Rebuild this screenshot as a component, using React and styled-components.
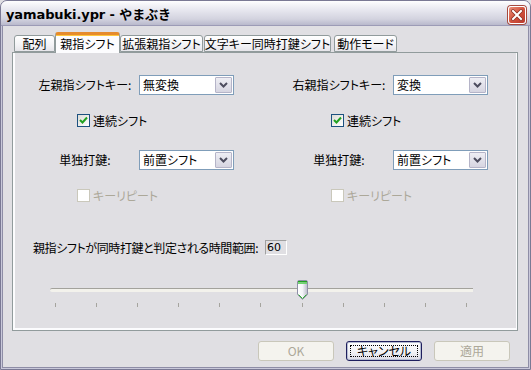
import React from 'react';
import styled, { createGlobalStyle } from 'styled-components';

const JP = `"Noto Sans CJK JP", "Noto Sans", sans-serif`;

const GlobalStyle = createGlobalStyle`
  html, body { margin: 0; padding: 0; background: #e0dfe3; }
  body { width: 531px; height: 370px; overflow: hidden; font-family: ${JP}; }
  * { box-sizing: border-box; }
`;

const Window = styled.div`
  width: 531px;
  height: 370px;
  display: flex;
  flex-direction: column;
  background: #e0dfe3;
  border-radius: 7px 7px 0 0;
  border: 1px solid #7a7994;
  box-shadow: inset 1px 0 #c9c8da, inset -1px 0 #c9c8da, inset 0 -1px #c9c8da,
    inset 2px 0 #8e8da6, inset -2px 0 #8e8da6, inset 0 -2px #8e8da6,
    inset 3px 0 #e0dfe3, inset -3px 0 #e0dfe3, inset 0 -3px #e0dfe3;
  overflow: hidden;
`;

const TitleBar = styled.div`
  height: 25px;
  flex: none;
  display: flex;
  align-items: center;
  justify-content: space-between;
  padding: 0 4px 0 5px;
  background: linear-gradient(#ffffff 0%, #f4f4f8 15%, #e3e3ec 45%, #d3d3df 75%, #b9b9cc 100%);
  border-bottom: 1px solid #9c9bb6;
`;

const Title = styled.span`
  font-family: "DejaVu Sans", ${JP};
  font-weight: bold;
  font-size: 13px;
  color: #000;
  letter-spacing: -0.1px;
  margin-top: 1px;
`;

const CloseBtn = styled.div`
  width: 18px;
  height: 18px;
  margin-top: 4px;
  border-radius: 3px;
  border: 1px solid #fff;
  background: linear-gradient(135deg, #e9907a 0%, #d3533e 50%, #b8392c 100%);
  box-shadow: 0 0 0 1px #a64a3e;
  display: flex;
  align-items: center;
  justify-content: center;
`;

const Body = styled.div`
  flex: 1;
  display: flex;
  flex-direction: column;
  padding: 6px 12px 0 11px;
`;

const TabRow = styled.div`
  display: flex;
  align-items: flex-end;
  height: 20px;
  padding-left: 2px;
  position: relative;
  z-index: 2;
`;

const Tab = styled.div`
  width: ${p => p.$w}px;
  margin-left: ${p => p.$ml || 0}px;
  height: ${p => (p.$active ? 21 : 17)}px;
  margin-bottom: ${p => (p.$active ? -1 : 0)}px;
  border: 1px solid #919b9c;
  border-bottom: ${p => (p.$active ? 'none' : '1px solid #919b9c')};
  border-radius: 3px 3px 0 0;
  background: ${p => (p.$active ? '#fcfcfe' : 'linear-gradient(#ffffff, #f3f3f6 60%, #e6e5ea)')};
  ${p => p.$active && 'border-top: 3px solid #e68b2c; box-shadow: inset 0 1px #ffc83c;'}
  font-family: ${JP};
  font-size: 12px;
  font-feature-settings: "palt";
  color: #000;
  display: flex;
  align-items: center;
  justify-content: center;
  line-height: 1;
  padding-top: ${p => (p.$active ? 0 : 1)}px;
  white-space: nowrap;
`;

const Panel = styled.div`
  width: 506px;
  height: 279px;
  border: 1px solid #919b9c;
  background: #e0dfe3;
  box-shadow: inset 2px 0 #fcfcfe, inset 0 -2px #fcfcfe, inset -1px 0 #fcfcfe;
  display: flex;
  flex-direction: column;
  padding: 22px 0 0 19px;
`;

const Columns = styled.div`
  display: grid;
  grid-template-columns: 254px 254px;
`;

const Column = styled.div`
  display: flex;
  flex-direction: column;
`;

const FieldRow = styled.div`
  display: flex;
  align-items: center;
  height: 20px;
  margin-top: ${p => p.$mt || 0}px;
`;

const Label = styled.span`
  width: 106px;
  text-align: center;
  font-family: ${JP};
  font-size: 12px;
  font-feature-settings: "palt";
  color: #000;
  white-space: nowrap;
  line-height: 1;
`;

const Select = styled.div`
  width: 95px;
  height: 20px;
  margin-left: 1px;
  border: 1px solid #7f9db9;
  background: #fff;
  display: flex;
  align-items: stretch;
`;

const SelectText = styled.span`
  flex: 1;
  padding-left: 3px;
  font-family: ${JP};
  font-size: 12px;
  font-feature-settings: "palt";
  color: #000;
  line-height: 18px;
  white-space: nowrap;
`;

const DropBtn = styled.div`
  width: 17px;
  margin: 1px;
  border: 1px solid #b5b4c8;
  border-radius: 1px;
  background: linear-gradient(#eeeef4, #d6d5e1);
  display: flex;
  align-items: center;
  justify-content: center;
`;

const CheckRow = styled.div`
  display: flex;
  align-items: center;
  height: 13px;
  margin-top: ${p => p.$mt || 0}px;
  padding-left: 45px;
  gap: 3px;
`;

const Box = styled.div`
  width: 13px;
  height: 13px;
  border: 1px solid ${p => (p.$disabled ? '#cac8bb' : '#1c5180')};
  background: ${p => (p.$disabled ? '#fff' : 'linear-gradient(135deg, #dcdcd7, #fff)')};
  display: flex;
  align-items: center;
  justify-content: center;
`;

const CheckText = styled.span`
  font-family: ${JP};
  font-size: 12px;
  font-feature-settings: "palt";
  color: ${p => (p.$disabled ? '#aca899' : '#000')};
  white-space: nowrap;
  line-height: 1;
`;

const TimeRow = styled.div`
  display: flex;
  align-items: center;
  margin-top: 38px;
  padding-left: 1px;
`;

const TimeLabel = styled.span`
  width: 232px;
  font-family: ${JP};
  font-size: 12px;
  font-feature-settings: "palt";
  letter-spacing: -0.4px;
  color: #000;
  white-space: nowrap;
  line-height: 1;
`;

const ValueBox = styled.div`
  width: 22px;
  height: 15px;
  border-top: 1px solid #a0a0a0;
  border-left: 1px solid #a0a0a0;
  border-right: 1px solid #fff;
  border-bottom: 1px solid #fff;
  font-family: "DejaVu Sans", sans-serif;
  font-size: 11px;
  line-height: 13px;
  padding-left: 1px;
  color: #000;
`;

const SliderWrap = styled.div`
  position: relative;
  width: 423px;
  margin-left: 18px;
  margin-top: 25px;
  height: 27px;
`;

const Track = styled.div`
  margin-top: 8px;
  height: 4px;
  border-radius: 2px 0 0 2px;
  background: #f3f2ec;
  border-top: 1px solid #a3a29c;
`;

const Ticks = styled.div`
  display: flex;
  justify-content: space-between;
  width: 412px;
  margin-left: 5px;
  margin-top: 11px;
`;

const Tick = styled.span`
  width: 1px;
  height: 4px;
  background: #a5a49e;
`;

const Thumb = styled.svg`
  position: absolute;
  left: ${p => p.$x}px;
  top: 0;
`;

const ButtonRow = styled.div`
  display: flex;
  justify-content: flex-end;
  gap: 12px;
  margin-top: 10px;
  padding-right: 8px;
`;

const Button = styled.div`
  width: 76px;
  height: 20px;
  border-radius: 3px;
  border: 1px solid ${p => (p.$disabled ? '#c9c7ba' : '#1f1f5e')};
  background: ${p => (p.$disabled ? '#f4f3ee' : 'linear-gradient(#ffffff, #f0f0f4 60%, #dcdbe6)')};
  ${p => p.$focus && 'box-shadow: inset 0 0 0 1px #b6bdd2;'}
  font-family: ${JP};
  font-size: 12px;
  font-feature-settings: "palt";
  color: ${p => (p.$disabled ? '#aca899' : '#000')};
  display: flex;
  align-items: center;
  justify-content: center;
  position: relative;
  line-height: 1;
`;

const FocusRing = styled.span`
  position: absolute;
  inset: 3px;
  border: 1px dotted #000;
`;

const Chevron = () => (
  <svg width="9" height="6" viewBox="0 0 9 6">
    <path d="M1 1 L4.5 4.5 L8 1" fill="none" stroke="#4d4d5f" strokeWidth="2" />
  </svg>
);

const Check = () => (
  <svg width="9" height="9" viewBox="0 0 9 9">
    <path d="M1 4 L3.5 6.5 L8 1.5" fill="none" stroke="#21a121" strokeWidth="2" />
  </svg>
);

const CloseIcon = () => (
  <svg width="12" height="12" viewBox="0 0 12 12">
    <path d="M2 2 L10 10 M10 2 L2 10" stroke="#8a2d22" strokeWidth="3.4" strokeLinecap="square" />
    <path d="M2 2 L10 10 M10 2 L2 10" stroke="#fff" strokeWidth="2" strokeLinecap="square" />
  </svg>
);

const ThumbIcon = () => (
  <>
    <defs>
      <linearGradient id="tg" x1="0" x2="1" y1="0" y2="0">
        <stop offset="0" stopColor="#ffffff" />
        <stop offset="0.5" stopColor="#f4f4f8" />
        <stop offset="1" stopColor="#b8b8c8" />
      </linearGradient>
    </defs>
    <path d="M0.5 2 Q0.5 0.5 2 0.5 H9 Q10.5 0.5 10.5 2 V14.5 L5.5 19.5 L0.5 14.5 Z" fill="url(#tg)" stroke="#8f8fa6" />
    <rect x="1" y="1" width="9" height="1.5" fill="#21a121" />
    <rect x="1" y="2.5" width="9" height="1.5" fill="#6fd46f" />
    <path d="M1.5 14.5 L5.5 18.5 L9.5 14.5" fill="none" stroke="#35b335" strokeWidth="1" />
  </>
);

const columns = [
  { key: '左親指シフトキー:', value: '無変換' },
  { key: '右親指シフトキー:', value: '変換' },
];

export default function App() {
  return (
    <>
      <GlobalStyle />
      <Window>
        <TitleBar>
          <Title>yamabuki.ypr - やまぶき</Title>
          <CloseBtn><CloseIcon /></CloseBtn>
        </TitleBar>
        <Body>
          <TabRow>
            <Tab $w={41}>配列</Tab>
            <Tab $w={65} $active>親指シフト</Tab>
            <Tab $w={83}>拡張親指シフト</Tab>
            <Tab $w={127} $ml={1}>文字キー同時打鍵シフト</Tab>
            <Tab $w={63} $ml={3}>動作モード</Tab>
          </TabRow>
          <Panel>
            <Columns>
              {columns.map(c => (
                <Column key={c.key}>
                  <FieldRow>
                    <Label>{c.key}</Label>
                    <Select>
                      <SelectText>{c.value}</SelectText>
                      <DropBtn><Chevron /></DropBtn>
                    </Select>
                  </FieldRow>
                  <CheckRow $mt={19}>
                    <Box><Check /></Box>
                    <CheckText>連続シフト</CheckText>
                  </CheckRow>
                  <FieldRow $mt={23}>
                    <Label>単独打鍵:</Label>
                    <Select>
                      <SelectText>前置シフト</SelectText>
                      <DropBtn><Chevron /></DropBtn>
                    </Select>
                  </FieldRow>
                  <CheckRow $mt={19}>
                    <Box $disabled />
                    <CheckText $disabled>キーリピート</CheckText>
                  </CheckRow>
                </Column>
              ))}
            </Columns>
            <TimeRow>
              <TimeLabel>親指シフトが同時打鍵と判定される時間範囲:</TimeLabel>
              <ValueBox>60</ValueBox>
            </TimeRow>
            <SliderWrap>
              <Track />
              <Ticks>
                {Array.from({ length: 11 }, (_, i) => <Tick key={i} />)}
              </Ticks>
              <Thumb $x={247} width="11" height="21" viewBox="0 0 11 21">
                <ThumbIcon />
              </Thumb>
            </SliderWrap>
          </Panel>
          <ButtonRow>
            <Button $disabled>OK</Button>
            <Button $focus><FocusRing />キャンセル</Button>
            <Button $disabled>適用</Button>
          </ButtonRow>
        </Body>
      </Window>
    </>
  );
}
